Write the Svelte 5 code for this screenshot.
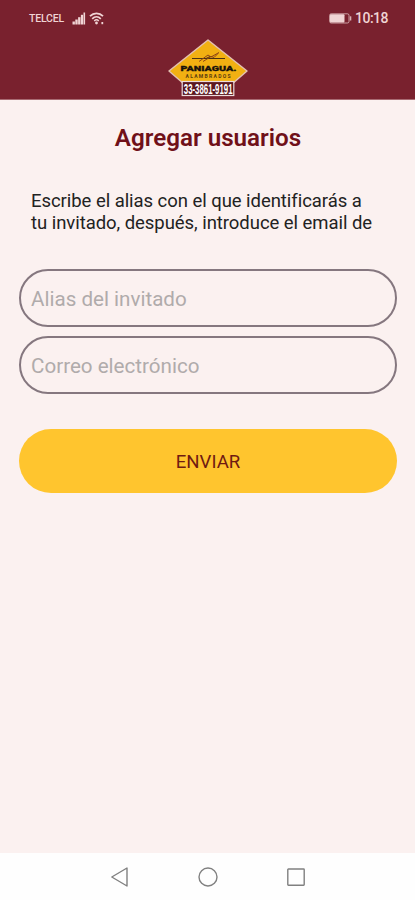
<script lang="ts">
	let alias = $state('');
	let email = $state('');
</script>

<div class="screen">
	<header class="top">
		<div class="status-bar">
			<div class="status-left">
				<span class="carrier">TELCEL</span>
				<svg class="signal" width="14" height="13" viewBox="0 0 14 13" fill="currentColor">
					<rect x="0.5" y="9.5" width="2.4" height="3" />
					<rect x="3.3" y="7.5" width="2.4" height="5" />
					<rect x="6.1" y="5.2" width="2.4" height="7.3" />
					<rect x="8.9" y="2.8" width="2.2" height="9.7" />
					<rect x="11.5" y="0.5" width="1.6" height="12" />
				</svg>
				<svg class="wifi" width="16" height="13" viewBox="0 0 16 13" fill="none" stroke="currentColor">
					<path d="M1 4.2C4.7 0.4 10.3 0.4 14 4.2" stroke-width="1.8" />
					<path d="M3.2 6.8C5.8 4.2 9.2 4.2 11.8 6.8" stroke-width="1.7" />
					<path d="M5.2 9C6.6 7.6 8.4 7.6 9.8 9" stroke-width="1.4" />
					<circle cx="7.5" cy="11" r="1.4" fill="currentColor" stroke="none" />
					<path d="M13.3 10v2.2" stroke-width="1.8" />
				</svg>
			</div>
			<div class="status-right">
				<svg class="battery" width="23" height="11" viewBox="0 0 23 11">
					<rect x="0.6" y="0.8" width="19.4" height="9.2" rx="1.6" fill="none" stroke="currentColor" stroke-opacity="0.7" />
					<rect x="1" y="1.2" width="14.5" height="8.4" rx="1" fill="currentColor" />
					<rect x="20.8" y="3.3" width="1.5" height="4.2" fill="currentColor" fill-opacity="0.8" />
				</svg>
				<span class="clock">10:18</span>
			</div>
		</div>
		<svg class="logo" width="82" height="60" viewBox="0 0 82 60">
			<path d="M41 2L80 33L65 46H17L2 33Z" fill="#f2b012" stroke="#e3c0b0" stroke-width="1.5" stroke-linejoin="round" />
			<g fill="none" stroke="#4a3212">
				<path d="M25 20.5H39L43 18.5M37 20.5H58" stroke-width="1" />
				<path d="M32 23.5L41 17L44 19L52 14.5M36 23.5L44 18.5L47 19.5L51 15.5" stroke-width="1" stroke="#8d4416" />
			</g>
			<text x="13.5" y="33" textLength="56" lengthAdjust="spacingAndGlyphs" class="brand">PANIAGUA.</text>
			<text x="18.5" y="40.4" textLength="45" class="brand-sub">ALAMBRADOS</text>
			<rect x="15.2" y="43.5" width="51.6" height="14" fill="#5b1820" stroke="#ecdcdc" stroke-width="1.2" />
			<text transform="translate(16.8 55.8) scale(0.54 1)" class="phone">33-3861-9191</text>
		</svg>
	</header>

	<main class="content">
		<h1 class="title">Agregar usuarios</h1>
		<p class="description">
			Escribe el alias con el que identificarás a<br />tu invitado, después, introduce el email de
		</p>
		<form class="form" onsubmit={(e) => e.preventDefault()}>
			<input class="field" type="text" placeholder="Alias del invitado" bind:value={alias} />
			<input class="field" type="text" placeholder="Correo electrónico" bind:value={email} />
			<button class="submit" type="submit">ENVIAR</button>
		</form>
	</main>

	<nav class="nav-bar">
		<svg width="20" height="22" viewBox="0 0 20 22">
			<path d="M1.8 11L17 2V20Z" />
		</svg>
		<svg width="20" height="22" viewBox="0 0 20 22">
			<circle cx="10" cy="11" r="9" />
		</svg>
		<svg width="20" height="22" viewBox="0 0 20 22">
			<rect x="1.8" y="3" width="16.4" height="16.2" rx="0.6" />
		</svg>
	</nav>
</div>

<style>
	:global(body) {
		margin: 0;
		background: #fbf1f0;
	}

	.screen {
		display: flex;
		flex-direction: column;
		width: 415px;
		height: 900px;
		overflow: hidden;
		background: #fbf1f0;
		font-family: Roboto, 'Liberation Sans', sans-serif;
	}

	.top {
		display: flex;
		flex-direction: column;
		align-items: center;
		box-sizing: border-box;
		height: 100px;
		background: #79212e;
		border-bottom: 1px solid #a86a72;
	}

	.status-bar {
		display: flex;
		justify-content: space-between;
		box-sizing: border-box;
		width: 100%;
		height: 38px;
		padding: 0 27px 2px 29px;
		color: #f0d4d4;
	}

	.status-left,
	.status-right {
		display: flex;
		align-items: center;
	}

	.carrier {
		width: 43px;
		font-size: 10.5px;
		font-weight: 500;
		letter-spacing: -0.2px;
	}

	.wifi {
		margin-left: 3px;
	}

	.clock {
		margin-left: 3px;
		font-size: 14px;
		font-weight: 500;
		letter-spacing: -0.5px;
	}

	.logo {
		flex: none;
	}

	.brand {
		font: 900 8px Roboto, sans-serif;
		fill: #17120c;
		stroke: #17120c;
		stroke-width: 0.3px;
	}

	.brand-sub {
		font: 700 5px Roboto, sans-serif;
		fill: #5b3d10;
	}

	.phone {
		font: 700 14.5px 'Liberation Sans', sans-serif;
		fill: #fff;
	}

	.content {
		flex: 1;
		padding: 0 18px 0 19px;
	}

	.title {
		margin: 23px 0 0;
		text-align: center;
		font-size: 24.2px;
		line-height: 30px;
		font-weight: 600;
		color: #701019;
	}

	.description {
		margin: 37px 0 0;
		padding-left: 12px;
		font-size: 18.5px;
		line-height: 22px;
		letter-spacing: -0.05px;
		white-space: nowrap;
		color: #222;
	}

	.form {
		display: flex;
		flex-direction: column;
		margin-top: 35px;
	}

	.field {
		box-sizing: border-box;
		width: 100%;
		height: 58px;
		margin: 0 0 9px;
		padding: 2px 10px 0;
		border: 2px solid #85777f;
		border-radius: 29px;
		outline: none;
		background: transparent;
		font-family: inherit;
		font-size: 20.6px;
		color: #222;
	}

	.field::placeholder {
		color: #b0abab;
		opacity: 1;
	}

	.submit {
		height: 64px;
		margin-top: 26px;
		padding-top: 3px;
		border: 0;
		border-radius: 32px;
		background: #ffc52e;
		font-family: inherit;
		font-size: 18.6px;
		color: #701a12;
	}

	.nav-bar {
		display: flex;
		justify-content: center;
		align-items: center;
		gap: 68px;
		height: 47px;
		background: #fefefe;
	}

	.nav-bar svg {
		fill: none;
		stroke: #808080;
		stroke-width: 1.4;
		stroke-linejoin: round;
	}
</style>
